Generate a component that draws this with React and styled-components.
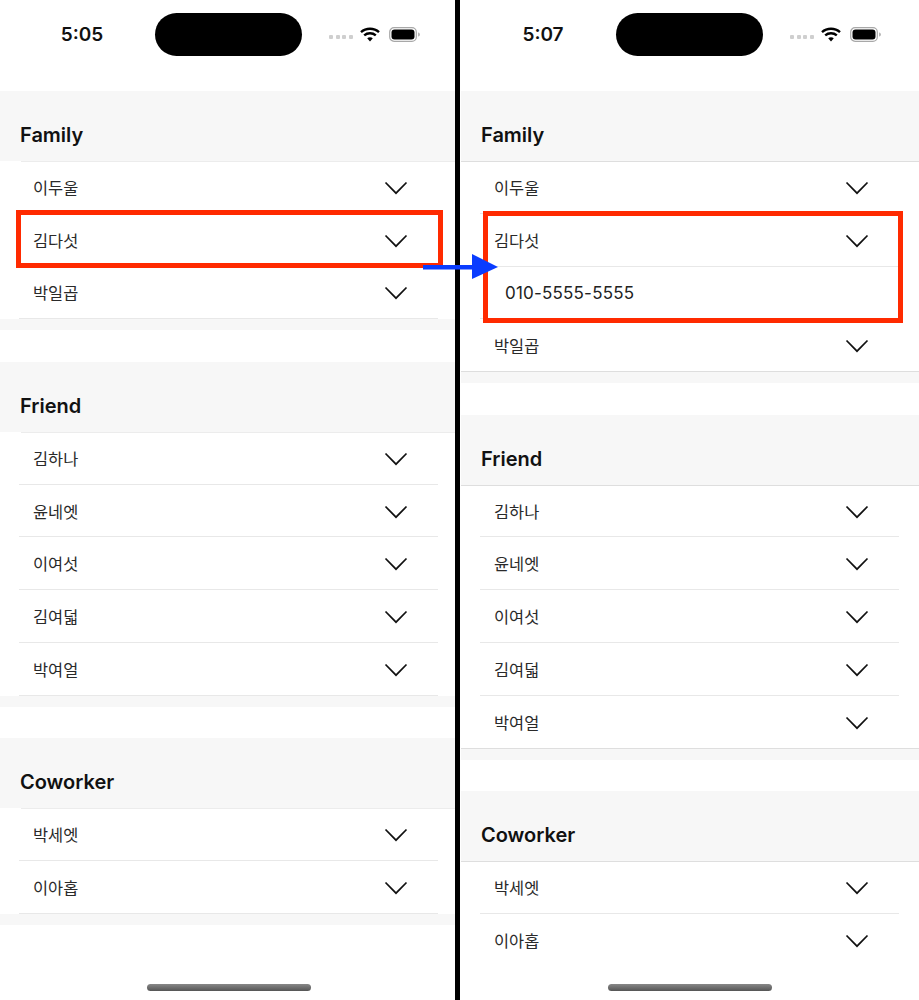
import React from "react";
import styled, { createGlobalStyle } from "styled-components";

const Global = createGlobalStyle`
  html, body { margin: 0; padding: 0; background: #fff; }
  body { font-family: Inter, "Noto Sans CJK KR", sans-serif; overflow: hidden; }
  * { box-sizing: border-box; }
`;

const Page = styled.div`
  position: relative;
  display: flex;
  width: 919px;
  height: 1000px;
  overflow: hidden;
  background: #fff;
`;
const Frame = styled.div`
  position: relative;
  flex: none;
  width: ${p => p.$width}px;
  height: 1000px;
  overflow: hidden;
`;
const Divider = styled.div`
  flex: none;
  width: 5px;
  margin-right: 1px;
  background: #000;
`;
const Screen = styled.div`
  width: 458px;
  height: 1000px;
`;
const StatusBar = styled.div`
  display: flex;
  align-items: center;
  height: 91px;
  padding: 13px 0 35px;
`;
const Time = styled.div`
  width: 155px;
  padding-left: 9px;
  text-align: center;
  font-size: 19px;
  font-weight: 600;
  color: #111;
  line-height: 24px;
  margin-top: 1px;
`;
const Island = styled.div`
  width: 147px;
  height: 43px;
  border-radius: 22px;
  background: #000;
`;
const StatusIcons = styled.div`
  display: flex;
  align-items: center;
  margin-left: 27px;
`;
const Signal = styled.div`
  display: flex;
  gap: 2.5px;
  margin-top: 5px;
  margin-right: 7px;
`;
const Dot = styled.span`
  width: 4px;
  height: 4px;
  border-radius: 1px;
  background: #cfcfcf;
`;
const Section = styled.section`
  margin-bottom: 31.5px;
  background: ${p => (p.$bare ? "#fff" : "#f7f7f7")};
  padding-bottom: ${p => (p.$bare ? 0 : 11)}px;
`;
const Title = styled.h2`
  margin: 0;
  height: 70px;
  padding: 32px 0 0 20px;
  font-size: 20px;
  line-height: 24px;
  font-weight: 600;
  color: #111;
  background: #f7f7f7;
`;
const List = styled.ul`
  margin: 0;
  padding: 0 0 0 19px;
  list-style: none;
  background: linear-gradient(${p => p.$line}, ${p => p.$line}) ${p => p.$inset}px 0 / 100% 1px no-repeat #fff;
`;
const Item = styled.li`
  width: 419px;
`;
const Row = styled.div`
  display: flex;
  align-items: center;
  justify-content: space-between;
  height: 51.8px;
  padding: 0 30px 0 14px;
`;
const Name = styled.span`
  font-family: "Noto Sans CJK KR", sans-serif;
  font-size: 16.4px;
  color: #2a2a2a;
`;
const Detail = styled.div`
  display: flex;
  align-items: center;
  height: 51.8px;
  padding: 1px 0 0 25px;
  font-size: 17px;
  letter-spacing: 0.2px;
  color: #222;
`;
const Separator = styled.div`
  height: 1px;
  margin-left: ${p => (p.$full ? -19 : 0)}px;
  width: ${p => (p.$full ? 458 : 419)}px;
  background: ${p => (p.$full ? "#dedede" : "#e8e8e8")};
`;
const Chevron = styled.svg`
  width: 24px;
  height: 14px;
  flex: none;
  display: block;
  margin-top: 2px;
`;
const HomeBar = styled.div`
  position: absolute;
  left: 147px;
  top: 984px;
  width: 164px;
  height: 7px;
  border-radius: 4px;
  background: linear-gradient(#888, #555);
`;
const Highlight = styled.div`
  position: absolute;
  left: ${p => p.$x}px;
  top: ${p => p.$y}px;
  width: ${p => p.$w}px;
  height: ${p => p.$h}px;
  border: 5px solid #ff2a00;
`;
const ArrowMark = styled.svg`
  position: absolute;
  left: 423px;
  top: 252px;
  width: 78px;
  height: 30px;
`;

const ChevronIcon = () => (
  <Chevron viewBox="0 0 24 14" fill="none">
    <polyline points="1.5,1.5 12,12.2 22.5,1.5" stroke="#111" strokeWidth="1.7" />
  </Chevron>
);

const StatusRight = () => (
  <StatusIcons>
    <Signal>{[0, 1, 2, 3].map(i => <Dot key={i} />)}</Signal>
    <svg width="20" height="15" viewBox="0 0 20 15" fill="none">
      <path d="M1 5.2C6 0.6 14 0.6 19 5.2" stroke="#000" strokeWidth="2.4" />
      <path d="M4.2 8.4C7.5 5.5 12.5 5.5 15.8 8.4" stroke="#000" strokeWidth="2.4" />
      <path d="M7.2 11.2C8.8 9.8 11.2 9.8 12.8 11.2L10 14.4Z" fill="#000" />
    </svg>
    <svg width="33" height="15" viewBox="0 0 33 15" fill="none" style={{ marginLeft: 9 }}>
      <rect x="0.7" y="0.7" width="26.6" height="13.6" rx="4.4" stroke="#a8a8a8" strokeWidth="1.2" />
      <rect x="2.5" y="2.5" width="23" height="10" rx="3" fill="#000" />
      <path d="M29.2 5.4C30.4 5.8 30.8 6.5 30.8 7.5C30.8 8.5 30.4 9.2 29.2 9.6Z" fill="#a8a8a8" />
    </svg>
  </StatusIcons>
);

const groups = [
  { title: "Family", names: ["이두울", "김다섯", "박일곱"] },
  { title: "Friend", names: ["김하나", "윤네엣", "이여섯", "김여덟", "박여얼"] },
  { title: "Coworker", names: ["박세엣", "이아홉"] },
];

const Phone = ({ time, open }) => (
  <Screen>
    <StatusBar>
      <Time>{time}</Time>
      <Island />
      <StatusRight />
    </StatusBar>
    {groups.map((g, gi) => {
      const lastGroup = gi === groups.length - 1;
      return (
        <Section key={g.title} $bare={open && lastGroup}>
          <Title>{g.title}</Title>
          <List $line={open ? "#dedede" : "#ececec"} $inset={open ? 0 : 21}>
            {g.names.map((n, i) => {
              const lastRow = i === g.names.length - 1;
              return (
                <Item key={n}>
                  <Row>
                    <Name>{n}</Name>
                    <ChevronIcon />
                  </Row>
                  {open === n && (
                    <>
                      <Separator />
                      <Detail>010-5555-5555</Detail>
                    </>
                  )}
                  {!(open && lastGroup && lastRow) && <Separator $full={open && lastRow} />}
                </Item>
              );
            })}
          </List>
        </Section>
      );
    })}
    <HomeBar />
  </Screen>
);

export default function App() {
  return (
    <Page>
      <Global />
      <Frame $width={455}>
        <Phone time="5:05" />
      </Frame>
      <Divider />
      <Frame $width={458}>
        <Phone time="5:07" open="김다섯" />
      </Frame>
      <Highlight $x={16} $y={210} $w={427} $h={58} />
      <Highlight $x={483} $y={211} $w={420} $h={112} />
      <ArrowMark viewBox="0 0 78 30">
        <rect x="0" y="13" width="52" height="4.5" fill="#0a3cff" />
        <polygon points="49,2 75,15 49,27" fill="#0a3cff" />
      </ArrowMark>
    </Page>
  );
}
